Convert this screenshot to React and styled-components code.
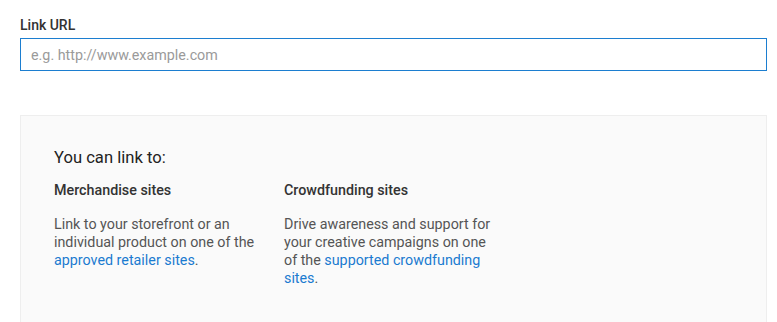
import React from "react";
import styled, { createGlobalStyle } from "styled-components";

const Global = createGlobalStyle`
  html, body { margin: 0; padding: 0; background: #fff; }
  body { font-family: Roboto, "Noto Sans", Arial, sans-serif; }
`;

const Page = styled.div`
  padding: 17px 10px 0 20px;
  display: flex;
  flex-direction: column;
`;

const Label = styled.label`
  font-size: 14px;
  font-weight: 500;
  color: #333;
  line-height: 16px;
  margin-bottom: 5px;
`;

const Input = styled.input`
  box-sizing: border-box;
  width: 100%;
  height: 33px;
  margin: 0;
  padding: 0 10px;
  border: 1px solid #1c7ed0;
  border-radius: 0;
  outline: none;
  font-family: Roboto, Arial, sans-serif;
  font-size: 14.3px;
  color: #333;
  caret-color: #333;
  &::placeholder { color: #9a9a9a; opacity: 1; }
`;

const InfoBox = styled.section`
  margin-top: 44px;
  background: #fafafa;
  border: 1px solid #eeeeee;
  border-bottom: none;
  padding: 32px 33px 35px;
`;

const Heading = styled.h2`
  margin: 0 0 14px;
  font-size: 16.6px;
  font-weight: 400;
  line-height: 20px;
  color: #222;
`;

const Columns = styled.div`
  display: flex;
  gap: 20px;
`;

const Column = styled.div`
  width: 210px;
`;

const SubHeading = styled.h3`
  margin: 0 0 16px;
  font-size: 14.3px;
  font-weight: 500;
  line-height: 17px;
  color: #333;
`;

const Body = styled.p`
  margin: 0;
  font-size: 14.3px;
  line-height: 18px;
  color: #555;
`;

const Link = styled.a`
  color: #1a7bd0;
  text-decoration: none;
`;

export default function App() {
  return (
    <>
      <Global />
      <Page>
        <Label htmlFor="url">Link URL</Label>
        <Input id="url" autoFocus placeholder="e.g. http://www.example.com" />
        <InfoBox>
          <Heading>You can link to:</Heading>
          <Columns>
            <Column>
              <SubHeading>Merchandise sites</SubHeading>
              <Body>
                Link to your storefront or an individual product on one of the{" "}
                <Link href="#">approved retailer sites</Link>.
              </Body>
            </Column>
            <Column>
              <SubHeading>Crowdfunding sites</SubHeading>
              <Body>
                Drive awareness and support for your creative campaigns on one of the{" "}
                <Link href="#">supported crowdfunding sites</Link>.
              </Body>
            </Column>
          </Columns>
        </InfoBox>
      </Page>
    </>
  );
}
